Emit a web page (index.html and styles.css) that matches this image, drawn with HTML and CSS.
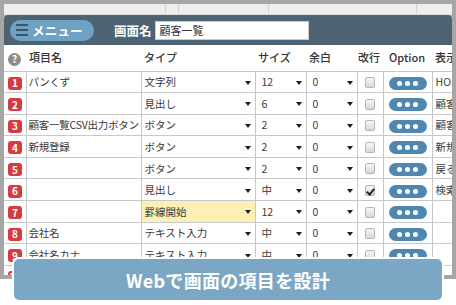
FILE: index.html
```html
<!DOCTYPE html>
<html lang="ja">
<head>
<meta charset="utf-8">
<link rel="stylesheet" href="styles.css">
</head>
<body>
<div class="frame">
  <div class="window">
    <div class="strip">
      <span class="sl s1"></span><span class="sl s2"></span><span class="sl s3"></span><span class="sl s4"></span>
    </div>
    <div class="app">
      <div class="toolbar">
        <div class="menu-btn">
          <span class="burger"><i></i><i></i><i></i></span>
          <span class="menu-label">メニュー</span>
        </div>
        <span class="screen-label">画面名</span>
        <div class="screen-input">顧客一覧</div>
      </div>
      <table class="grid">
        <colgroup>
          <col class="c-no"><col class="c-name"><col class="c-type"><col class="c-size"><col class="c-margin"><col class="c-br"><col class="c-opt"><col class="c-disp">
        </colgroup>
        <thead>
          <tr>
            <th class="help-cell"><span class="help">?</span></th>
            <th class="name">項目名</th>
            <th class="type">タイプ</th>
            <th class="num">サイズ</th>
            <th class="num">余白</th>
            <th class="br">改行</th>
            <th class="opt">Option</th>
            <th class="disp">表示</th>
          </tr>
        </thead>
        <tbody>
          <tr>
            <td class="no"><span class="badge">1</span></td>
            <td class="name">パンくず</td>
            <td class="type sel">文字列<span class="caret"></span></td>
            <td class="num sel">12<span class="caret"></span></td>
            <td class="num sel">0<span class="caret"></span></td>
            <td class="br"><span class="check"></span></td>
            <td class="opt"><span class="dots"><i></i><i></i><i></i></span></td>
            <td class="disp">HOME</td>
          </tr>
          <tr>
            <td class="no"><span class="badge">2</span></td>
            <td class="name"></td>
            <td class="type sel">見出し<span class="caret"></span></td>
            <td class="num sel">6<span class="caret"></span></td>
            <td class="num sel">0<span class="caret"></span></td>
            <td class="br"><span class="check"></span></td>
            <td class="opt"><span class="dots"><i></i><i></i><i></i></span></td>
            <td class="disp">顧客一覧</td>
          </tr>
          <tr>
            <td class="no"><span class="badge">3</span></td>
            <td class="name">顧客一覧CSV出力ボタン</td>
            <td class="type sel">ボタン<span class="caret"></span></td>
            <td class="num sel">2<span class="caret"></span></td>
            <td class="num sel">0<span class="caret"></span></td>
            <td class="br"><span class="check"></span></td>
            <td class="opt"><span class="dots"><i></i><i></i><i></i></span></td>
            <td class="disp">顧客一覧</td>
          </tr>
          <tr>
            <td class="no"><span class="badge">4</span></td>
            <td class="name">新規登録</td>
            <td class="type sel">ボタン<span class="caret"></span></td>
            <td class="num sel">2<span class="caret"></span></td>
            <td class="num sel">0<span class="caret"></span></td>
            <td class="br"><span class="check"></span></td>
            <td class="opt"><span class="dots"><i></i><i></i><i></i></span></td>
            <td class="disp">新規登録</td>
          </tr>
          <tr>
            <td class="no"><span class="badge">5</span></td>
            <td class="name"></td>
            <td class="type sel">ボタン<span class="caret"></span></td>
            <td class="num sel">2<span class="caret"></span></td>
            <td class="num sel">0<span class="caret"></span></td>
            <td class="br"><span class="check"></span></td>
            <td class="opt"><span class="dots"><i></i><i></i><i></i></span></td>
            <td class="disp">戻る</td>
          </tr>
          <tr>
            <td class="no"><span class="badge">6</span></td>
            <td class="name"></td>
            <td class="type sel">見出し<span class="caret"></span></td>
            <td class="num sel">中<span class="caret"></span></td>
            <td class="num sel">0<span class="caret"></span></td>
            <td class="br"><span class="check checked"></span></td>
            <td class="opt"><span class="dots"><i></i><i></i><i></i></span></td>
            <td class="disp">検索条件</td>
          </tr>
          <tr>
            <td class="no"><span class="badge">7</span></td>
            <td class="name"></td>
            <td class="type sel hl">罫線開始<span class="caret"></span></td>
            <td class="num sel">12<span class="caret"></span></td>
            <td class="num sel">0<span class="caret"></span></td>
            <td class="br"><span class="check"></span></td>
            <td class="opt"><span class="dots"><i></i><i></i><i></i></span></td>
            <td class="disp"></td>
          </tr>
          <tr>
            <td class="no"><span class="badge">8</span></td>
            <td class="name">会社名</td>
            <td class="type sel">テキスト入力<span class="caret"></span></td>
            <td class="num sel">中<span class="caret"></span></td>
            <td class="num sel">0<span class="caret"></span></td>
            <td class="br"><span class="check"></span></td>
            <td class="opt"><span class="dots"><i></i><i></i><i></i></span></td>
            <td class="disp"></td>
          </tr>
          <tr>
            <td class="no"><span class="badge">9</span></td>
            <td class="name">会社名カナ</td>
            <td class="type sel">テキスト入力<span class="caret"></span></td>
            <td class="num sel">中<span class="caret"></span></td>
            <td class="num sel">0<span class="caret"></span></td>
            <td class="br"><span class="check"></span></td>
            <td class="opt"><span class="dots"><i></i><i></i><i></i></span></td>
            <td class="disp"></td>
          </tr>
          <tr>
            <td class="no"><span class="badge">10</span></td>
            <td class="name"></td>
            <td class="type sel">テキスト入力<span class="caret"></span></td>
            <td class="num sel">中<span class="caret"></span></td>
            <td class="num sel">0<span class="caret"></span></td>
            <td class="br"><span class="check"></span></td>
            <td class="opt"><span class="dots"><i></i><i></i><i></i></span></td>
            <td class="disp"></td>
          </tr>
        </tbody>
      </table>
    </div>
  </div>
</div>
<div class="banner">Webで画面の項目を設計</div>
</body>
</html>
```

FILE: styles.css
```css
html, body {
  margin: 0;
  padding: 0;
}
body {
  width: 456px;
  height: 305px;
  overflow: hidden;
  position: relative;
  background: #ffffff;
  font-family: "Noto Sans CJK JP", "Noto Sans", sans-serif;
  color: #333;
}
.frame {
  height: 279px;
  box-sizing: border-box;
  background: #a6a6a6;
  padding: 4px 4px 4px 4px;
}
.window {
  height: 100%;
  overflow: hidden;
  display: flex;
  flex-direction: column;
}
.strip {
  height: 11px;
  flex: none;
  background: #eeeeee;
  position: relative;
  border-bottom: 1px solid #dcdcdc;
  box-sizing: border-box;
}
.sl {
  position: absolute;
  top: 0;
  bottom: 0;
  width: 1px;
  background: #d4d4d4;
}
.s1 { left: 161px; }
.s2 { left: 174px; }
.s3 { left: 264px; }
.s4 { left: 412px; }
.app {
  flex: 1;
  background: #fff;
  border-radius: 4px 4px 0 0;
  overflow: hidden;
}
.toolbar {
  height: 30px;
  background: #4e6371;
  display: flex;
  align-items: center;
  padding-left: 6px;
}
.menu-btn {
  width: 84px;
  height: 21px;
  box-sizing: border-box;
  border-radius: 11px;
  background: #6fa1c3;
  display: flex;
  align-items: center;
  padding-left: 6px;
  gap: 4px;
}
.burger {
  display: flex;
  flex-direction: column;
  gap: 3px;
  width: 12px;
}
.burger i {
  display: block;
  height: 2px;
  background: #3d5567;
}
.menu-label {
  color: #fff;
  font-size: 12.5px;
  font-weight: 700;
  letter-spacing: 0.2px;
}
.screen-label {
  color: #fff;
  font-size: 12.5px;
  font-weight: 700;
  margin-left: 20px;
}
.screen-input {
  margin-left: 3px;
  width: 154px;
  height: 19px;
  box-sizing: border-box;
  background: #fff;
  border: 1px solid #c9c9c9;
  font-size: 11px;
  line-height: 17px;
  padding-left: 4px;
  color: #333;
}
.grid {
  table-layout: fixed;
  border-collapse: collapse;
  width: 488px;
  font-size: 10.5px;
}
.c-no { width: 22px; }
.c-name { width: 115px; }
.c-type { width: 114px; }
.c-size { width: 51px; }
.c-margin { width: 51px; }
.c-br { width: 26px; }
.c-opt { width: 49px; }
.c-disp { width: 60px; }
.grid th {
  height: 26px;
  box-sizing: border-box;
  font-weight: 500;
  font-size: 11px;
  text-align: left;
  color: #333;
  padding: 0 0 1px 3px;
  border-bottom: 1px solid #c8c8c8;
  white-space: nowrap;
}
.grid th.num { padding-left: 3px; }
.grid th.br { padding-left: 1px; }
.grid th.opt { padding-left: 6px; }
.grid th.help-cell { padding-left: 4px; }
.help {
  display: inline-flex;
  align-items: center;
  justify-content: center;
  width: 13px;
  height: 13px;
  border-radius: 50%;
  background: #8c8c8c;
  color: #fff;
  font-size: 10px;
  font-weight: 700;
  line-height: 1;
  vertical-align: middle;
}
.grid td {
  height: 21.6px;
  box-sizing: border-box;
  padding: 0 0 0 3px;
  border-bottom: 1px solid #c8c8c8;
  border-right: 1px solid #c8c8c8;
  white-space: nowrap;
  overflow: hidden;
  color: #3a3a3a;
  position: relative;
}
.grid td.name {
  letter-spacing: -0.25px;
  padding-left: 2px;
}
.grid td.no {
  padding: 0 0 0 4px;
}
.badge {
  display: inline-flex;
  align-items: center;
  justify-content: center;
  width: 14px;
  height: 13px;
  border-radius: 3px;
  background: #d63c3f;
  color: #fff;
  font-size: 10px;
  font-weight: 700;
  line-height: 1;
  vertical-align: middle;
}
.grid td.num { padding-left: 6px; }
.grid td.hl { background: #fdf0b4; }
.caret {
  position: absolute;
  right: 4px;
  top: 50%;
  margin-top: -1px;
  width: 0;
  height: 0;
  border-left: 3px solid transparent;
  border-right: 3px solid transparent;
  border-top: 4px solid #1e1e1e;
}
.grid td.br {
  padding: 0;
  text-align: center;
}
.check {
  display: inline-block;
  width: 10px;
  height: 11px;
  box-sizing: border-box;
  border: 1px solid #b5b5b5;
  border-radius: 2px;
  background: linear-gradient(#f6f6f6, #d8d8d8);
  vertical-align: middle;
  position: relative;
  top: -1px;
}
.check.checked::after {
  content: "";
  position: absolute;
  left: 2px;
  top: 1px;
  width: 3px;
  height: 6px;
  border-right: 2px solid #222;
  border-bottom: 2px solid #222;
  transform: rotate(40deg);
}
.grid td.opt {
  padding: 0 0 0 5px;
}
.dots {
  display: inline-flex;
  align-items: center;
  justify-content: center;
  gap: 3px;
  width: 38px;
  height: 13px;
  border-radius: 7px;
  background: #4f87b0;
  vertical-align: middle;
}
.dots i {
  display: block;
  width: 5px;
  height: 5px;
  border-radius: 50%;
  background: #fff;
}
.grid td.disp {
  border-right: none;
  padding-left: 3px;
}
.banner {
  position: absolute;
  left: 12px;
  top: 257px;
  width: 432px;
  height: 45px;
  box-sizing: border-box;
  border: 2px solid #fff;
  border-radius: 7px;
  background: #7ba7c4;
  color: #fff;
  font-size: 18px;
  font-weight: 700;
  display: flex;
  align-items: center;
  justify-content: center;
  letter-spacing: 0.3px;
}
```
